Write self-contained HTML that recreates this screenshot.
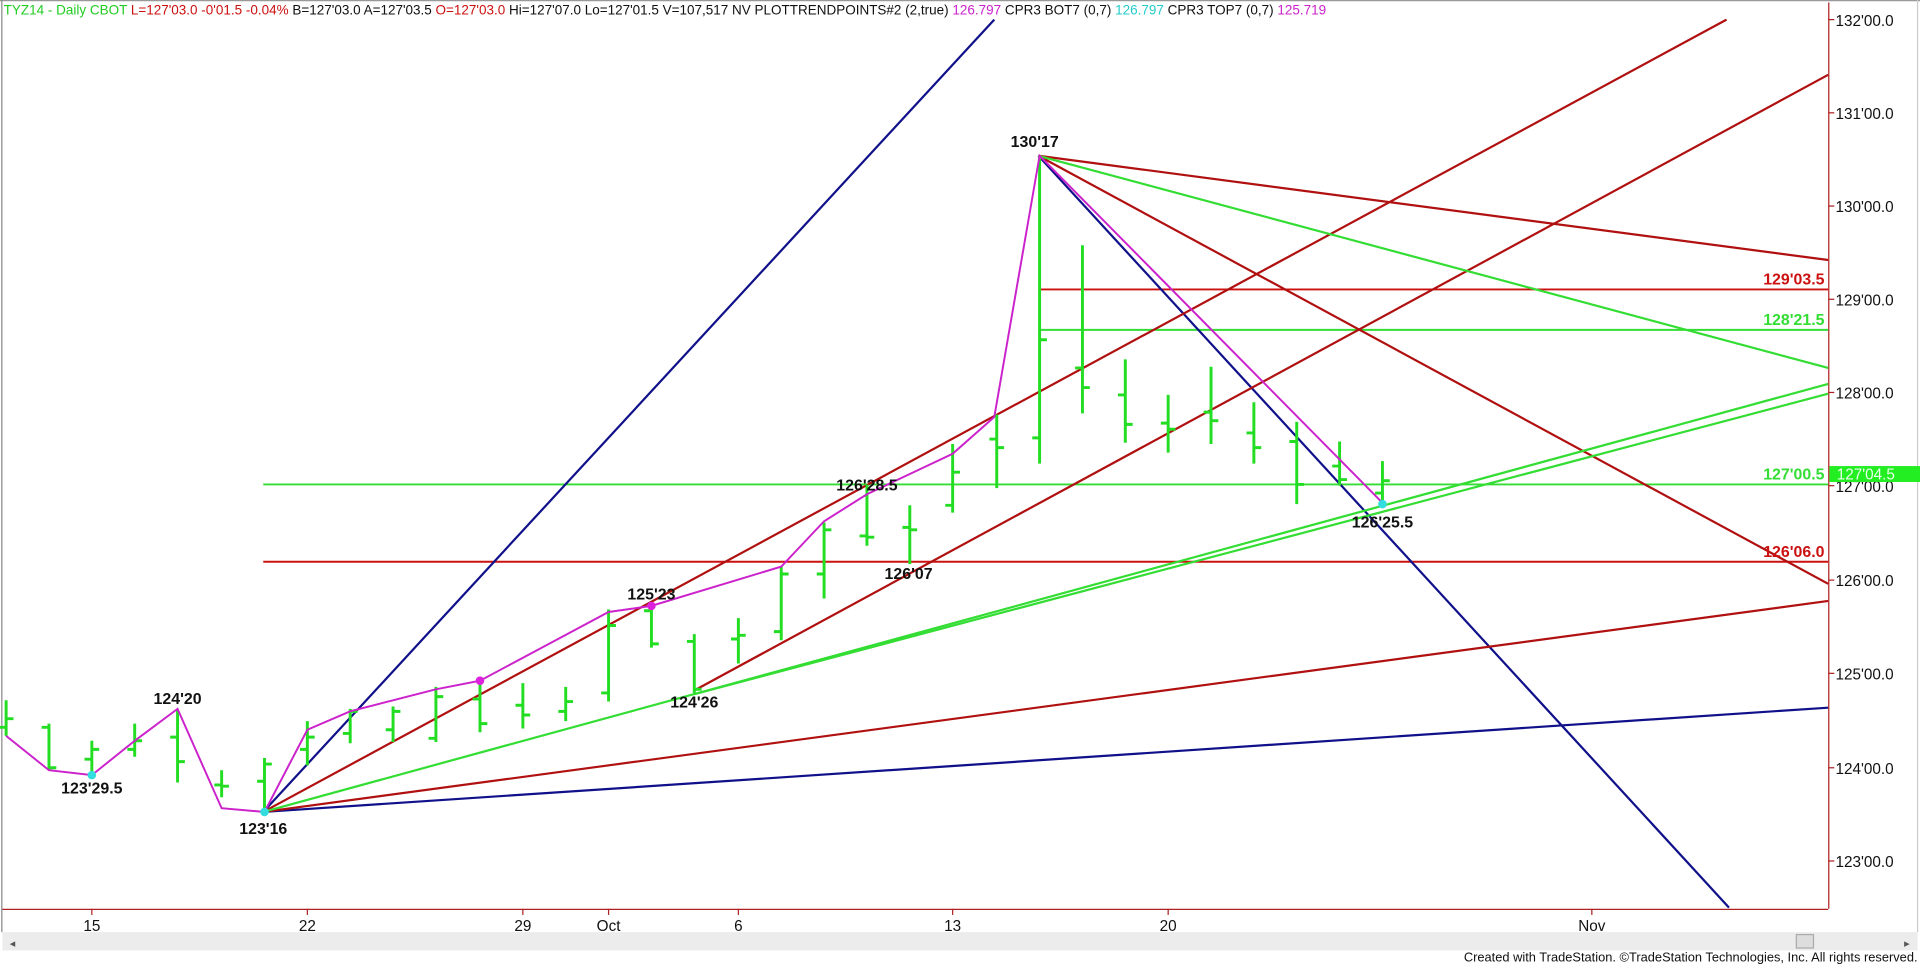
<!DOCTYPE html>
<html><head><meta charset="utf-8"><style>
html,body{margin:0;padding:0;background:#fff;overflow:hidden}
svg{display:block}
text{font-family:"Liberation Sans",Arial,sans-serif}
.b{font-weight:bold;font-size:13px;fill:#111}
.ax{font-size:12.5px;fill:#111}
</style></head><body>
<svg width="1920" height="964" viewBox="0 0 1568 786" preserveAspectRatio="none" xmlns="http://www.w3.org/2000/svg">
<rect width="1568" height="786" fill="#fff"/>
<line x1="0" y1="0.5" x2="1568" y2="0.5" stroke="#999"/>
<line x1="1.5" y1="0" x2="1.5" y2="760" stroke="#888"/>
<line x1="1566" y1="0" x2="1566" y2="760" stroke="#ccc"/>
<text x="3" y="12" font-size="11.6" textLength="1080" lengthAdjust="spacingAndGlyphs">
<tspan fill="#22cc22">TYZ14 - Daily  CBOT  </tspan><tspan fill="#cc1111">L=127'03.0  -0'01.5  -0.04%  </tspan><tspan fill="#111">B=127'03.0  A=127'03.5  </tspan><tspan fill="#cc1111">O=127'03.0  </tspan><tspan fill="#111">Hi=127'07.0  Lo=127'01.5  V=107,517  NV  PLOTTRENDPOINTS#2 (2,true)   </tspan><tspan fill="#cc22cc">126.797  </tspan><tspan fill="#111">CPR3 BOT7 (0,7)   </tspan><tspan fill="#22cccc">126.797  </tspan><tspan fill="#111">CPR3 TOP7 (0,7)   </tspan><tspan fill="#cc22cc">125.719</tspan></text>
<line x1="1493.5" y1="2" x2="1493.5" y2="741" stroke="#b02020"/>
<line x1="2" y1="741.5" x2="1493" y2="741.5" stroke="#b02020"/>
<g stroke="#b02020">
<line x1="1493" y1="16" x2="1498" y2="16"/><line x1="1493" y1="92" x2="1498" y2="92"/><line x1="1493" y1="168" x2="1498" y2="168"/><line x1="1493" y1="244" x2="1498" y2="244"/><line x1="1493" y1="320" x2="1498" y2="320"/><line x1="1493" y1="396" x2="1498" y2="396"/><line x1="1493" y1="473" x2="1498" y2="473"/><line x1="1493" y1="549" x2="1498" y2="549"/><line x1="1493" y1="626" x2="1498" y2="626"/><line x1="1493" y1="702" x2="1498" y2="702"/>
<line x1="75" y1="741" x2="75" y2="746"/><line x1="251" y1="741" x2="251" y2="746"/><line x1="427" y1="741" x2="427" y2="746"/><line x1="497" y1="741" x2="497" y2="746"/><line x1="603" y1="741" x2="603" y2="746"/><line x1="778" y1="741" x2="778" y2="746"/><line x1="954" y1="741" x2="954" y2="746"/><line x1="1300" y1="741" x2="1300" y2="746"/>
</g>
<g class="ax">
<text x="1499" y="21">132'00.0</text><text x="1499" y="97">131'00.0</text><text x="1499" y="173">130'00.0</text><text x="1499" y="249">129'00.0</text><text x="1499" y="325">128'00.0</text><text x="1499" y="401">127'00.0</text><text x="1499" y="478">126'00.0</text><text x="1499" y="554">125'00.0</text><text x="1499" y="631">124'00.0</text><text x="1499" y="707">123'00.0</text>
</g>
<g class="ax" text-anchor="middle">
<text x="75" y="759">15</text><text x="251" y="759">22</text><text x="427" y="759">29</text><text x="497" y="759">Oct</text><text x="603" y="759">6</text><text x="778" y="759">13</text><text x="954" y="759">20</text><text x="1300" y="759">Nov</text>
</g>
<rect x="1494" y="380" width="74" height="13" fill="#22ee22"/>
<text x="1500" y="391" font-size="12.5" fill="#e8ffe8">127'04.5</text>
<rect x="2" y="760" width="1564" height="15" fill="#ececec"/>
<rect x="1467" y="762" width="14" height="11" fill="#ddd" stroke="#aaa"/>
<text x="8" y="772" font-size="9" fill="#555">◂</text>
<text x="1555" y="772" font-size="9" fill="#555">▸</text>
<text x="1566" y="784" font-size="10.5" fill="#111" text-anchor="end">Created with TradeStation. ©TradeStation Technologies, Inc. All rights reserved.</text>
<g stroke-width="1.6">
<line x1="215" y1="395" x2="1493" y2="395" stroke="#33dd33"/>
<line x1="215" y1="458" x2="1493" y2="458" stroke="#cc1111"/>
<line x1="848" y1="236" x2="1493" y2="236" stroke="#cc1111"/>
<line x1="848" y1="269" x2="1493" y2="269" stroke="#33dd33"/>
</g>
<g stroke-width="1.8" fill="none">
<line x1="215" y1="662" x2="812" y2="16" stroke="#10108a"/>
<line x1="848" y1="127" x2="1412" y2="740" stroke="#10108a"/>
<line x1="215" y1="662" x2="1493" y2="577" stroke="#10108a"/>
<line x1="215" y1="662" x2="1410" y2="16" stroke="#b01010"/>
<line x1="567" y1="563" x2="1493" y2="61" stroke="#b01010"/>
<line x1="215" y1="662" x2="1493" y2="490" stroke="#b01010"/>
<line x1="848" y1="127" x2="1493" y2="212" stroke="#b01010"/>
<line x1="848" y1="127" x2="1493" y2="476" stroke="#b01010"/>
<line x1="848" y1="127" x2="1493" y2="300" stroke="#33dd33"/>
<line x1="215" y1="662" x2="1493" y2="313" stroke="#33dd33"/>
<line x1="567" y1="566" x2="1493" y2="321" stroke="#33dd33"/>
</g>
<g stroke="#22dd22" stroke-width="2.4" fill="none">
<path d="M5 571V600M-1 593H5M5 586H11"/>
<path d="M40 590V628M34 593H40M40 626H46"/>
<path d="M75 604V633M69 619H75M75 611H81"/>
<path d="M110 590V617M104 611H110M110 604H116"/>
<path d="M145 579V638M139 601H145M145 621H151"/>
<path d="M181 628V650M175 640H181M181 641H187"/>
<path d="M216 618V660M210 637H216M216 623H222"/>
<path d="M251 588V624M245 611H251M251 601H257"/>
<path d="M286 578V606M280 598H286M286 580H292"/>
<path d="M321 576V605M315 595H321M321 580H327"/>
<path d="M356 560V605M350 602H356M356 568H362"/>
<path d="M392 555V597M386 570H392M392 590H398"/>
<path d="M427 557V594M421 575H427M427 583H433"/>
<path d="M462 560V588M456 580H462M462 572H468"/>
<path d="M497 497V572M491 565H497M497 510H503"/>
<path d="M532 491V528M526 498H532M532 525H538"/>
<path d="M567 517V565M561 523H567M567 562H573"/>
<path d="M603 504V541M597 521H603M603 518H609"/>
<path d="M638 462V522M632 515H638M638 468H644"/>
<path d="M673 426V488M667 468H673M673 432H679"/>
<path d="M708 395V445M702 437H708M708 438H714"/>
<path d="M743 412V460M737 430H743M743 432H749"/>
<path d="M778 362V418M772 412H778M778 385H784"/>
<path d="M814 338V398M808 358H814M814 365H820"/>
<path d="M849 128V378M843 357H849M849 277H855"/>
<path d="M884 200V337M878 300H884M884 316H890"/>
<path d="M919 293V361M913 322H919M919 346H925"/>
<path d="M954 322V369M948 345H954M954 350H960"/>
<path d="M989 299V362M983 336H989M989 343H995"/>
<path d="M1024 328V378M1018 353H1024M1024 365H1030"/>
<path d="M1059 344V411M1053 360H1059M1059 395H1065"/>
<path d="M1094 360V396M1088 380H1094M1094 391H1100"/>
<path d="M1129 376V410M1123 402H1129M1129 392H1135"/>
</g>
<polyline fill="none" stroke="#cc22cc" stroke-width="1.6" points="5,600 40,628 75,632 110,604 145,578 181,659 216,662 251,595 286,580 356,562 392,555 497,499 532,494 638,462 673,425 708,403 778,370 812,340 849,127 1129,410"/>
<circle cx="75" cy="632" r="3.5" fill="#33dddd"/><circle cx="216" cy="662" r="3.5" fill="#33dddd"/><circle cx="1129" cy="411" r="3.5" fill="#33dddd"/>
<circle cx="392" cy="555" r="3.5" fill="#dd22dd"/><circle cx="532" cy="494" r="3.5" fill="#dd22dd"/>
<g class="b" text-anchor="middle">
<text x="845" y="120">130'17</text><text x="708" y="400">126'28.5</text><text x="532" y="489">125'23</text><text x="742" y="472">126'07</text><text x="567" y="577">124'26</text><text x="145" y="574">124'20</text><text x="75" y="647">123'29.5</text><text x="215" y="680">123'16</text><text x="1129" y="430">126'25.5</text>
</g>
<g font-weight="bold" font-size="13" text-anchor="end">
<text x="1490" y="232" fill="#cc1111">129'03.5</text><text x="1490" y="265" fill="#33dd33">128'21.5</text><text x="1490" y="391" fill="#33dd33">127'00.5</text><text x="1490" y="454" fill="#cc1111">126'06.0</text>
</g>
</svg>
</body></html>
